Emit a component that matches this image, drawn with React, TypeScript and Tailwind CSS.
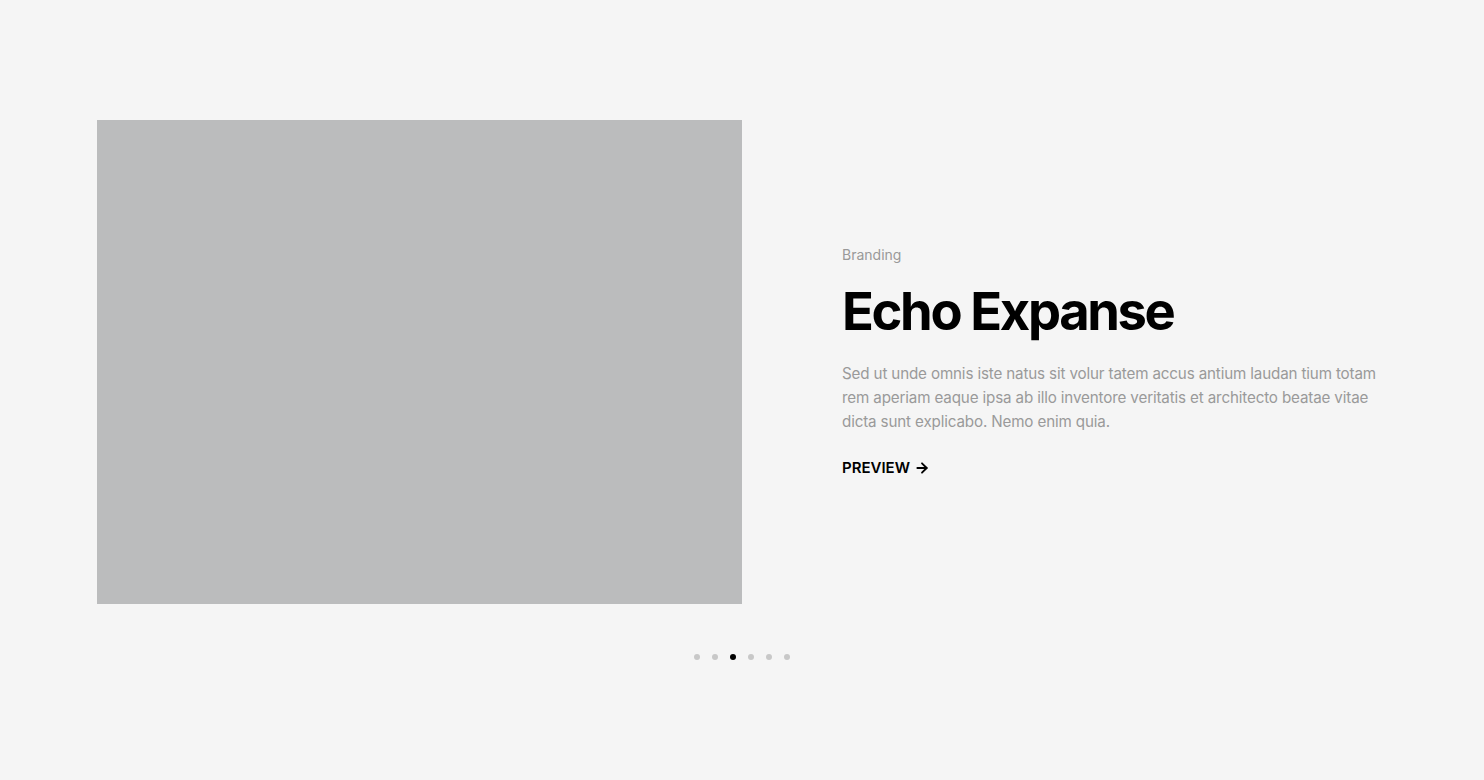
import { ArrowRight } from "lucide-react";

const dots = [0, 1, 2, 3, 4, 5];

export default function App() {
  return (
    <div className="min-h-screen bg-[#f5f5f5] font-['Inter','Noto_Sans',sans-serif]">
      <section className="mx-auto w-[1290px] pt-[120px]">
        <div className="flex items-center gap-[100px]">
          <div className="h-[484px] w-[645px] shrink-0 bg-[#bbbcbd]" />
          <div className="flex-1">
            <p className="text-[14px] leading-5 text-[#999999]">Branding</p>
            <h2 className="mt-[14px] text-[52.5px] leading-[64px] font-bold tracking-[-0.045em] text-black">
              Echo Expanse
            </h2>
            <p className="mt-[19px] text-[15.2px] leading-6 tracking-[-0.01em] text-[#9a9a9a]">
              Sed ut unde omnis iste natus sit volur tatem accus antium laudan
              tium totam rem aperiam eaque ipsa ab illo inventore veritatis et
              architecto beatae vitae dicta sunt explicabo. Nemo enim quia.
            </p>
            <a
              href="#"
              className="mt-[23px] inline-flex items-center gap-1 text-[15px] font-semibold uppercase text-black"
            >
              Preview
              <ArrowRight className="h-4 w-4" strokeWidth={2.75} />
            </a>
          </div>
        </div>
        <div className="mt-[50px] flex justify-center gap-3">
          {dots.map((i) => (
            <span
              key={i}
              className={
                i === 2
                  ? "h-1.5 w-1.5 rounded-full bg-black"
                  : "h-1.5 w-1.5 rounded-full bg-[#c8c8c8]"
              }
            />
          ))}
        </div>
      </section>
    </div>
  );
}
